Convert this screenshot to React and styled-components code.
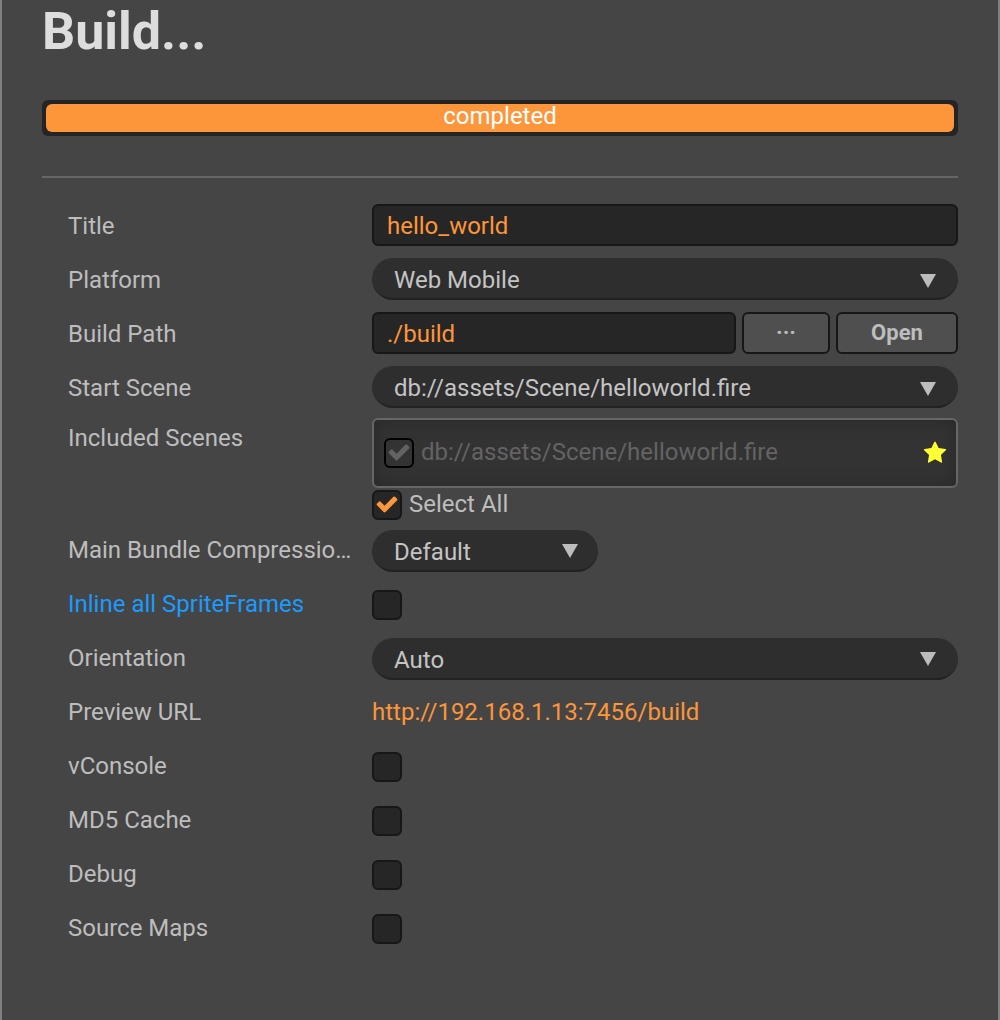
import React, { useId, useState } from "react";
import styled, { createGlobalStyle, css } from "styled-components";

const GlobalStyle = createGlobalStyle`
  *, *::before, *::after { box-sizing: border-box; }
  body {
    margin: 0;
    background: #454545;
    color: #bdbdbd;
    font-family: Roboto, "Liberation Sans", sans-serif;
    font-size: 24px;
    line-height: 28px;
  }
  button, input, select { font: inherit; margin: 0; }
`;

const Panel = styled.main`
  min-height: 100vh;
  padding: 0 40px 40px;
  border: solid #808080;
  border-width: 0 2px;
`;

const Heading = styled.h1`
  margin: 0 0 36px;
  color: #dddddd;
  font-size: 52px;
  font-weight: 700;
  line-height: 64px;
`;

const ProgressTrack = styled.div`
  height: 36px;
  padding: 4px;
  border-radius: 6px;
  background: #242424;
`;

const ProgressFill = styled.div`
  height: 100%;
  border-radius: 6px;
  background: #fd953b;
  color: #ffffff;
  line-height: 24px;
  text-align: center;
`;

const Divider = styled.hr`
  height: 2px;
  margin: 40px 0 26px;
  border: 0;
  background: #666666;
`;

const Form = styled.form`
  display: flex;
  flex-direction: column;
  gap: 10px;
  padding-left: 26px;
`;

const Group = styled.div`
  display: flex;
  flex-direction: column;
  gap: 12px;
`;

const Row = styled.div`
  display: grid;
  grid-template-columns: 304px minmax(0, 1fr);
  align-items: start;
  min-height: 42px;
`;

const labelText = css`
  height: 42px;
  color: ${(p) => (p.$active ? "#1b9bfd" : "inherit")};
  line-height: ${(p) => (p.$dense ? "40px" : "44px")};
  white-space: nowrap;
`;

const Label = styled.label`${labelText}`;
const Caption = styled.span`${labelText}`;

const TextInput = styled.input`
  flex: 1;
  width: 100%;
  min-width: 0;
  height: 42px;
  padding: 2px 13px 0;
  border: 2px solid #171717;
  border-radius: 6px;
  outline: none;
  background: #262626;
  color: #fd953b;
`;

const PathControls = styled.div`
  display: flex;
  gap: 6px;
`;

const Button = styled.button`
  width: ${(p) => (p.$wide ? "122px" : "88px")};
  height: 42px;
  padding: 0;
  border: 2px solid #171717;
  border-radius: 6px;
  background: #4f4f4f;
  color: #bdbdbd;
  font-size: 22px;
  font-weight: 700;
`;

const SelectBox = styled.div`
  display: grid;
  align-items: center;
  width: ${(p) => (p.$narrow ? "226px" : "100%")};

  & > * { grid-area: 1 / 1; }
`;

const NativeSelect = styled.select`
  width: 100%;
  height: 42px;
  padding: 4px 44px 0 22px;
  border: 0;
  border-bottom: 2px solid #222222;
  border-radius: 21px;
  outline: none;
  appearance: none;
  background: #2e2e2e;
  color: #c4c4c4;
`;

const Arrow = styled.svg`
  justify-self: end;
  width: 16px;
  height: 14px;
  margin-top: ${(p) => (p.$dense ? "0" : "4px")};
  margin-right: ${(p) => (p.$narrow ? "20px" : "22px")};
  fill: #bdbdbd;
  pointer-events: none;
`;

const CheckBox = styled.span`
  display: grid;
  flex: none;
  width: 30px;
  height: 30px;

  & > * { grid-area: 1 / 1; }
`;

const CheckInput = styled.input`
  width: 30px;
  height: 30px;
  border: 2px solid #171717;
  border-radius: 6px;
  appearance: none;
  background: #262626;

  &:disabled {
    border-color: #000000;
    background: #333333;
  }
`;

const CheckMark = styled.svg`
  justify-self: center;
  width: 24px;
  height: 24px;
  margin-top: 2px;
  fill: #fd953b;
  pointer-events: none;

  ${CheckInput}:disabled + & { fill: #636363; }
`;

const CheckCell = styled.div`
  padding: 6px 0;
`;

const SceneColumn = styled.div`
  display: flex;
  flex-direction: column;
  gap: 2px;
`;

const SceneList = styled.div`
  padding: 18px 9px 18px 10px;
  border: 2px solid #666666;
  border-radius: 6px;
  background: #333333;
  box-shadow: inset 0 0 20px rgba(0, 0, 0, 0.2);
`;

const SceneItem = styled.div`
  display: flex;
  align-items: center;
  justify-content: space-between;
`;

const CheckLabel = styled.label`
  display: flex;
  gap: 7px;
  color: ${(p) => (p.$muted ? "#636363" : "inherit")};
`;

const Star = styled.svg`
  flex: none;
  width: 24px;
  height: 24px;
  fill: #ffff33;
`;

const PreviewLink = styled.a`
  justify-self: start;
  color: #fd953b;
  line-height: 40px;
  text-decoration: none;
`;

function Checkbox({ defaultChecked = false, ...rest }) {
  const [checked, setChecked] = useState(defaultChecked);
  return (
    <CheckBox>
      <CheckInput
        type="checkbox"
        checked={checked}
        onChange={(e) => setChecked(e.target.checked)}
        {...rest}
      />
      {checked && (
        <CheckMark viewBox="0 0 1792 1792" aria-hidden="true">
          <path d="M1671 566q0 40-28 68l-724 724-136 136q-28 28-68 28t-68-28l-136-136-362-362q-28-28-28-68t28-68l136-136q28-28 68-28t68 28l294 295 656-657q28-28 68-28t68 28l136 136q28 28 28 68z" />
        </CheckMark>
      )}
    </CheckBox>
  );
}

function SelectRow({ label, options, dense, narrow }) {
  const id = useId();
  return (
    <Row>
      <Label htmlFor={id} $dense={dense}>{label}</Label>
      <SelectBox $narrow={narrow}>
        <NativeSelect id={id}>
          {options.map((option) => (
            <option key={option}>{option}</option>
          ))}
        </NativeSelect>
        <Arrow viewBox="0 0 16 14" $dense={dense} $narrow={narrow} aria-hidden="true">
          <path d="M0 0h16L8 14z" />
        </Arrow>
      </SelectBox>
    </Row>
  );
}

function CheckRow({ label, active }) {
  const id = useId();
  return (
    <Row>
      <Label htmlFor={id} $dense $active={active}>{label}</Label>
      <CheckCell>
        <Checkbox id={id} />
      </CheckCell>
    </Row>
  );
}

export default function App() {
  const scene = "db://assets/Scene/helloworld.fire";
  return (
    <>
      <GlobalStyle />
      <Panel>
        <Heading>Build...</Heading>
        <ProgressTrack role="progressbar" aria-valuenow={100}>
          <ProgressFill>completed</ProgressFill>
        </ProgressTrack>
        <Divider />
        <Form onSubmit={(e) => e.preventDefault()}>
          <Group>
            <Row>
              <Label htmlFor="title">Title</Label>
              <TextInput id="title" defaultValue="hello_world" />
            </Row>
            <SelectRow label="Platform" options={["Web Mobile"]} />
            <Row>
              <Label htmlFor="path">Build Path</Label>
              <PathControls>
                <TextInput id="path" defaultValue="./build" />
                <Button type="button">···</Button>
                <Button type="button" $wide>Open</Button>
              </PathControls>
            </Row>
            <SelectRow label="Start Scene" options={[scene]} />
          </Group>
          <Row>
            <Caption $dense>Included Scenes</Caption>
            <SceneColumn>
              <SceneList>
                <SceneItem>
                  <CheckLabel $muted>
                    <Checkbox defaultChecked disabled />
                    {scene}
                  </CheckLabel>
                  <Star viewBox="0 0 1792 1792" aria-hidden="true">
                    <path d="M1728 647q0 22-26 48l-363 354 86 500q1 7 1 20 0 21-10.5 35.5t-30.5 14.5q-19 0-40-12l-449-236-449 236q-22 12-40 12-21 0-31.5-14.5t-10.5-35.5q0-6 2-20l86-500-364-354q-25-27-25-48 0-37 56-46l502-73 225-455q19-41 49-41t49 41l225 455 502 73q56 9 56 46z" />
                  </Star>
                </SceneItem>
              </SceneList>
              <CheckLabel>
                <Checkbox defaultChecked />
                Select All
              </CheckLabel>
            </SceneColumn>
          </Row>
          <Group>
            <SelectRow label="Main Bundle Compressio…" options={["Default"]} dense narrow />
            <CheckRow label="Inline all SpriteFrames" active />
            <SelectRow label="Orientation" options={["Auto"]} dense />
            <Row>
              <Caption $dense>Preview URL</Caption>
              <PreviewLink href="http://192.168.1.13:7456/build">
                http://192.168.1.13:7456/build
              </PreviewLink>
            </Row>
            <CheckRow label="vConsole" />
            <CheckRow label="MD5 Cache" />
            <CheckRow label="Debug" />
            <CheckRow label="Source Maps" />
          </Group>
        </Form>
      </Panel>
    </>
  );
}
